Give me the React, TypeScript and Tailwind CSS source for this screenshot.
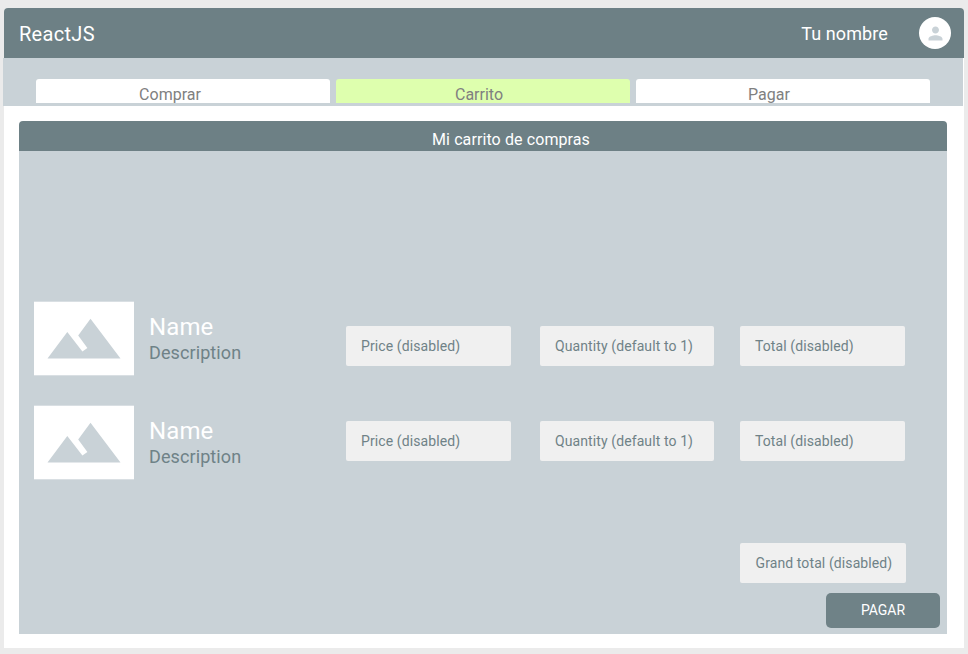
const tabs = [
  { label: 'Comprar', active: false, shift: 'pr-[26px]' },
  { label: 'Carrito', active: true, shift: 'pr-[8px]' },
  { label: 'Pagar', active: false, shift: 'pr-[28px]' },
];

const products = [1, 2];

function Field({ label, width }: { label: string; width: string }) {
  return (
    <div className={`flex h-10 shrink-0 items-center whitespace-nowrap rounded-[2px] bg-[#f0f0f0] text-sm tracking-[0.1px] text-[#6f8287] ${width}`}>
      {label}
    </div>
  );
}

function Thumbnail() {
  return (
    <svg className="block h-[75px] w-[100px] shrink-0" viewBox="0 0 100 75">
      <rect y="0.7" width="100" height="73.6" fill="#fff" />
      <path
        fill="#c9d2d7"
        d="M13.5 57.6 33.3 31 48.4 50.5 53.4 46.9 44.2 34.4 56.5 17.7 86.5 57.6Z"
      />
    </svg>
  );
}

function Avatar() {
  return (
    <div className="flex size-8 items-center justify-center rounded-full bg-white">
      <svg className="size-[21px]" viewBox="0 0 24 24" fill="#c9d2d7">
        <path d="M12 12c2.21 0 4-1.79 4-4s-1.79-4-4-4-4 1.79-4 4 1.79 4 4 4zm0 2c-2.67 0-8 1.34-8 4v2h16v-2c0-2.66-5.33-4-8-4z" />
      </svg>
    </div>
  );
}

export default function App() {
  return (
    <div className="h-[654px] w-[968px] overflow-hidden bg-[#ebebeb] px-1 pt-2 font-[Roboto,sans-serif]">
      <div className="h-[640px] w-[960px] rounded-t-[4px] bg-white">
        <header className="flex h-[50px] items-center rounded-t-[4px] bg-[#6d8085] pl-[15px] pr-[13px] text-white">
          <h1 className="pt-[2px] text-xl tracking-[0.3px]">ReactJS</h1>
          <span className="ml-auto mr-[31px] pt-px text-lg tracking-[0.1px]">Tu nombre</span>
          <Avatar />
        </header>

        <nav className="-ml-px flex h-12 w-[960px] gap-[6px] bg-[#c9d2d7] pb-[3px] pl-[33px] pt-[21px]">
          {tabs.map((tab) => (
            <div
              key={tab.label}
              className={`h-6 w-[294px] rounded-t-[3px] pt-1 text-center text-base text-[#808080] ${tab.shift} ${tab.active ? 'bg-[#deffae]' : 'bg-white'}`}
            >
              {tab.label}
            </div>
          ))}
        </nav>

        <main className="ml-[15px] mt-[15px] flex h-[513px] w-[928px] flex-col bg-[#c9d2d7]">
          <div className="bg-white">
            <h2 className="h-[30px] rounded-t-[4px] bg-[#6d8085] pl-[56px] pt-[7px] text-center text-base tracking-[0.1px] text-white">
              Mi carrito de compras
            </h2>
          </div>

          <div className="flex pl-[15px] pt-[150px]">
            <div className="flex w-[312px] flex-col gap-[29px]">
              {products.map((id) => (
                <div key={id} className="flex h-[75px] gap-[15px]">
                  <Thumbnail />
                  <div className="pt-[10px]">
                    <div className="text-2xl leading-8 tracking-[0.1px] text-white">Name</div>
                    <div className="text-lg leading-5 tracking-[0.1px] text-[#6f8287]">Description</div>
                  </div>
                </div>
              ))}
            </div>
            <div className="flex flex-col gap-[55px] pt-[25px]">
              {products.map((id) => (
                <div key={id} className="flex">
                  <Field label="Price (disabled)" width="w-[165px] pl-[15px]" />
                  <div className="ml-[29px] mr-[26px]">
                    <Field label="Quantity (default to 1)" width="w-[174px] pl-[15px]" />
                  </div>
                  <Field label="Total (disabled)" width="w-[165px] pl-[15px]" />
                </div>
              ))}
            </div>
          </div>

          <div className="mt-auto flex flex-col items-end gap-[10px] pb-[6px] pr-[7px]">
            <div className="mr-[34px]">
              <Field label="Grand total (disabled)" width="w-[166px] pl-[15.5px]" />
            </div>
            <button className="h-[35px] w-[114px] rounded-[5px] bg-[#6f8287] pb-px text-sm text-white">
              PAGAR
            </button>
          </div>
        </main>
      </div>
    </div>
  );
}
